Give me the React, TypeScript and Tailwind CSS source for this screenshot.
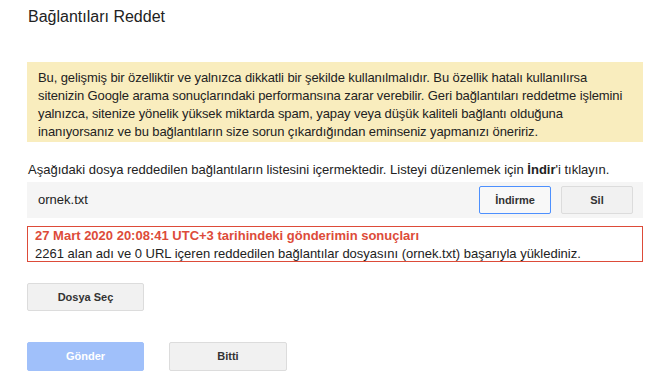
const font = { fontFamily: '"Liberation Sans", Arial, sans-serif' };

const btn =
  "h-[28px] rounded-[2px] border text-[11px] font-bold flex items-center justify-center";

const warning = [
  "Bu, gelişmiş bir özelliktir ve yalnızca dikkatli bir şekilde kullanılmalıdır. Bu özellik hatalı kullanılırsa",
  "sitenizin Google arama sonuçlarındaki performansına zarar verebilir. Geri bağlantıları reddetme işlemini",
  "yalnızca, sitenize yönelik yüksek miktarda spam, yapay veya düşük kaliteli bağlantı olduğuna",
  "inanıyorsanız ve bu bağlantıların size sorun çıkardığından eminseniz yapmanızı öneririz.",
];

export default function App() {
  return (
    <div className="w-[672px] h-[386px] bg-white text-[#222] overflow-hidden" style={font}>
      <div className="pl-[27px] pr-[29px]">
        <h1 className="pt-[6px] text-[16px] leading-[22px] pl-[1px]">Bağlantıları Reddet</h1>

        <div className="mt-[34px] h-[80px] bg-[#f9edbe] pl-[11px] pt-[7px] text-[13px] leading-[18px] text-[#222] tracking-[-0.1px]">
          {warning.map((line) => (
            <div key={line} className="whitespace-nowrap">
              {line}
            </div>
          ))}
        </div>

        <p className="mt-[19px] pl-[1px] text-[13px] leading-[18px] whitespace-nowrap">
          Aşağıdaki dosya reddedilen bağlantıların listesini içermektedir. Listeyi düzenlemek için{" "}
          <span className="font-bold">İndir</span>'i tıklayın.
        </p>

        <div className="mt-[3px] h-[36px] bg-[#f5f5f5] flex items-center pl-[11px] pr-[10px]">
          <span className="flex-1 text-[13px]">ornek.txt</span>
          <button className={`${btn} w-[72px] border-[#4d90fe] bg-[#f8f8f8] text-[#333]`}>İndirme</button>
          <button className={`${btn} w-[72px] ml-[10px] border-[#dcdcdc] bg-[#f1f1f1] text-[#333]`}>Sil</button>
        </div>

        <div className="mt-[8px] h-[36px] border border-[#dd4b39] pl-[7px] text-[13px] leading-[16px] pt-[1px]">
          <div className="text-[#dd4b39] font-bold">27 Mart 2020 20:08:41 UTC+3 tarihindeki gönderimin sonuçları</div>
          <div className="mt-[2px] whitespace-nowrap">
            2261 alan adı ve 0 URL içeren reddedilen bağlantılar dosyasını (ornek.txt) başarıyla yüklediniz.
          </div>
        </div>

        <button className={`${btn} mt-[21px] w-[117px] border-[#dcdcdc] bg-[#f1f1f1] text-[#333]`}>Dosya Seç</button>

        <div className="mt-[31px] flex gap-[25px]">
          <button className={`${btn} w-[117px] h-[29px] border-[#a0c0fa] bg-[#a0c0fa] text-white`}>Gönder</button>
          <button className={`${btn} w-[118px] h-[29px] border-[#dcdcdc] bg-[#f1f1f1] text-[#333]`}>Bitti</button>
        </div>
      </div>
    </div>
  );
}
